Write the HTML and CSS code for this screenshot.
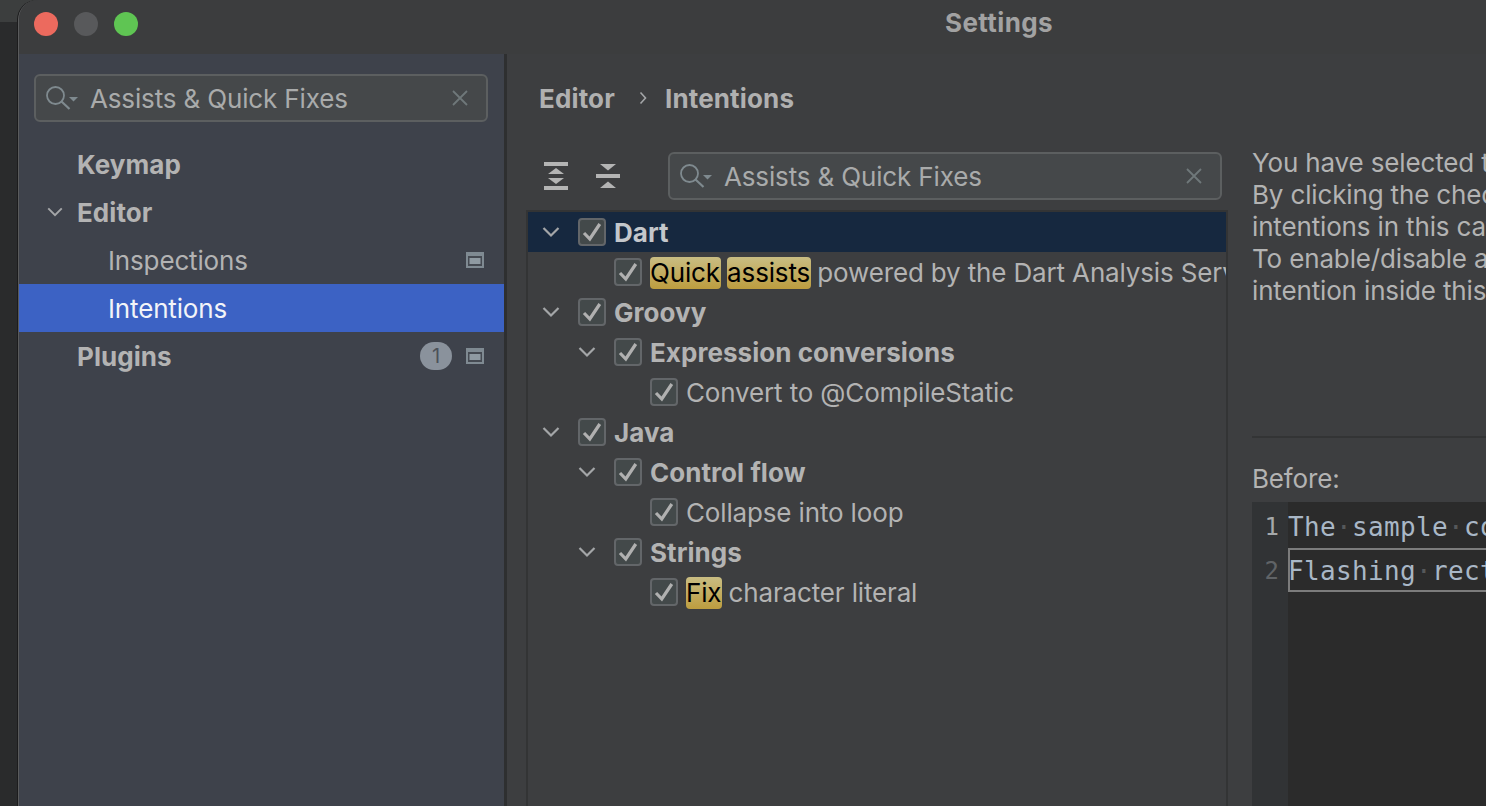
FILE: index.html
```html
<!DOCTYPE html>
<html lang="en">
<head>
  <meta charset="UTF-8">
  <title>Settings</title>
  <link rel="stylesheet" href="styles.css">
</head>
<body>
  <svg class="defs" width="0" height="0">
    <symbol id="check" viewBox="0 0 24 24"><path d="M4 13 L9.800 19 L19.800 4" fill="none" stroke="#b0b0b0" stroke-width="3.200"/></symbol>
    <symbol id="chev" viewBox="0 0 20 20"><path d="M2.500 6 L10 13.500 L17.500 6" fill="none" stroke="#a4a6a8" stroke-width="2.200"/></symbol>
    <symbol id="find" viewBox="0 0 34 30">
      <circle cx="9.500" cy="12.500" r="8.500" fill="none" stroke="#7f8a8f" stroke-width="1.800"/>
      <path d="M15.500 18.500 L23.500 26" stroke="#7f8a8f" stroke-width="2.200"/>
      <path d="M23 14 H32 L27.500 18.500 Z" fill="#7f8a8f"/>
    </symbol>
    <symbol id="close" viewBox="0 0 16 16"><path d="M1 1 L15 15 M15 1 L1 15" stroke="#6f787a" stroke-width="1.800"/></symbol>
    <symbol id="scope" viewBox="0 0 18 16">
      <rect width="18" height="16" fill="#7f8a92"/>
      <rect x="2" y="4" width="14" height="10" fill="#454a52"/>
      <rect x="3.500" y="6" width="11" height="6" fill="#8f9aa2"/>
    </symbol>
  </svg>

  <div class="window">
    <header class="titlebar">
      <div class="lights">
        <span class="light red"></span>
        <span class="light grey"></span>
        <span class="light green"></span>
      </div>
      <div class="title">Settings</div>
    </header>

    <div class="columns">
      <nav class="sidebar">
        <div class="search side-search">
          <svg class="find-icon"><use href="#find"/></svg>
          <span class="search-text">Assists &amp; Quick Fixes</span>
          <svg class="close-icon"><use href="#close"/></svg>
        </div>
        <ul class="side-list">
          <li class="side-row bold"><span class="side-arrow"></span>Keymap</li>
          <li class="side-row bold"><span class="side-arrow"><svg class="side-chev"><use href="#chev"/></svg></span>Editor</li>
          <li class="side-row sub">Inspections<svg class="scope-icon"><use href="#scope"/></svg></li>
          <li class="side-row sub selected">Intentions</li>
          <li class="side-row bold"><span class="side-arrow"></span>Plugins<span class="badge">1</span><svg class="scope-icon after-badge"><use href="#scope"/></svg></li>
        </ul>
      </nav>

      <main class="main">
        <div class="crumbs">
          <span>Editor</span>
          <svg class="crumb-sep" viewBox="0 0 8 14"><path d="M1.500 1.500 L6.500 7 L1.500 12.500" fill="none" stroke="#a4a6a8" stroke-width="1.600"/></svg>
          <span>Intentions</span>
        </div>

        <div class="panes">
          <section class="left-pane">
            <div class="toolbar">
              <svg class="tool" viewBox="0 0 24 28">
                <path d="M0 0 H24 V4 H0 Z M0 24 H24 V28 H0 Z" fill="#b4b4b4"/>
                <path d="M12 6 L20 12 H4 Z M4 16 H20 L12 22 Z" fill="#b4b4b4"/>
              </svg>
              <svg class="tool" viewBox="0 0 24 28">
                <path d="M0 12 H24 V16 H0 Z" fill="#b4b4b4"/>
                <path d="M4 2 H20 L12 8.500 Z M12 19.500 L20 26 H4 Z" fill="#b4b4b4"/>
              </svg>
              <div class="search tree-search">
                <svg class="find-icon"><use href="#find"/></svg>
                <span class="search-text">Assists &amp; Quick Fixes</span>
                <svg class="close-icon"><use href="#close"/></svg>
              </div>
            </div>

            <div class="tree">
              <div class="row lvl0 current bold">
                <span class="arrow"><svg><use href="#chev"/></svg></span>
                <span class="box"><svg><use href="#check"/></svg></span>
                <span>Dart</span>
              </div>
              <div class="row lvl1">
                <span class="arrow"></span>
                <span class="box"><svg><use href="#check"/></svg></span>
                <span class="hits"><mark>Quick</mark> <mark>assists</mark> powered by the Dart Analysis Server</span>
              </div>
              <div class="row lvl0 bold">
                <span class="arrow"><svg><use href="#chev"/></svg></span>
                <span class="box"><svg><use href="#check"/></svg></span>
                <span>Groovy</span>
              </div>
              <div class="row lvl1 bold">
                <span class="arrow"><svg><use href="#chev"/></svg></span>
                <span class="box"><svg><use href="#check"/></svg></span>
                <span>Expression conversions</span>
              </div>
              <div class="row lvl2">
                <span class="arrow"></span>
                <span class="box"><svg><use href="#check"/></svg></span>
                <span>Convert to @CompileStatic</span>
              </div>
              <div class="row lvl0 bold">
                <span class="arrow"><svg><use href="#chev"/></svg></span>
                <span class="box"><svg><use href="#check"/></svg></span>
                <span>Java</span>
              </div>
              <div class="row lvl1 bold">
                <span class="arrow"><svg><use href="#chev"/></svg></span>
                <span class="box"><svg><use href="#check"/></svg></span>
                <span>Control flow</span>
              </div>
              <div class="row lvl2">
                <span class="arrow"></span>
                <span class="box"><svg><use href="#check"/></svg></span>
                <span>Collapse into loop</span>
              </div>
              <div class="row lvl1 bold">
                <span class="arrow"><svg><use href="#chev"/></svg></span>
                <span class="box"><svg><use href="#check"/></svg></span>
                <span>Strings</span>
              </div>
              <div class="row lvl2">
                <span class="arrow"></span>
                <span class="box"><svg><use href="#check"/></svg></span>
                <span class="hits"><mark>Fix</mark> character literal</span>
              </div>
            </div>
          </section>

          <section class="right-pane">
            <div class="desc">
              <div>You have selected the intention category</div>
              <div>By clicking the checkbox you can enable</div>
              <div>intentions in this category.</div>
              <div>To enable/disable a particular intention</div>
              <div>intention inside this category.</div>
            </div>
            <hr class="rule">
            <div class="before">Before:</div>
            <div class="editor">
              <div class="gutter">
                <div class="num">1</div>
                <div class="num dim">2</div>
              </div>
              <div class="code">
                <div class="line first">The<i>·</i>sample<i>·</i>code</div>
                <div class="line caret">Flashing<i>·</i>rectangle</div>
              </div>
            </div>
          </section>
        </div>
      </main>
    </div>
  </div>
</body>
</html>
```

FILE: styles.css
```css
html, body {
  margin: 0;
  height: 806px;
  overflow: hidden;
}
body {
  background: linear-gradient(#3c3e3e 0, #3c3e3e 22px, #2a2b2c 22px);
  font-family: Inter, "Noto Sans", sans-serif;
  font-size: 26px;
  letter-spacing: -0.15px;
  color: #b3b3b3;
}
.defs {
  display: block;
  height: 0;
}
ul {
  list-style: none;
  margin: 0;
  padding: 0;
}
.bold {
  font-weight: 700;
  letter-spacing: 0.05px;
}

.window {
  width: 1960px;
  height: 806px;
  margin-left: 18px;
  border-left: 1px solid #5a5b5c;
  border-top-left-radius: 20px;
  box-shadow: -1px 0 0 #1c1c1d;
  background: #3d3e40;
  display: flex;
  flex-direction: column;
  overflow: hidden;
}

.titlebar {
  height: 54px;
  flex: none;
  background: #3c3d3e;
  display: grid;
  grid-template-columns: 1fr auto 1fr;
  align-items: center;
  padding-bottom: 6px;
  box-sizing: border-box;
}
.lights {
  display: flex;
  gap: 16px;
  padding-left: 15px;
}
.light {
  width: 24px;
  height: 24px;
  border-radius: 50%;
}
.red { background: #ec6a5e; }
.grey { background: #58595b; }
.green { background: #5fc553; }
.title {
  font-weight: 700;
  letter-spacing: 0.4px;
  color: #a2a2a2;
  margin-bottom: 3px;
}

.columns {
  flex: 1;
  display: flex;
  min-height: 0;
}

.sidebar {
  width: 485px;
  flex: none;
  background: #3e424b;
  border-right: 3px solid #2e2f30;
  padding-top: 20px;
}

.search {
  height: 48px;
  box-sizing: border-box;
  border: 2px solid #5c5f60;
  border-radius: 6px;
  background: #45484a;
  display: flex;
  align-items: center;
  color: #a9abab;
}
.side-search {
  margin: 0 16px 18px 15px;
}
.find-icon {
  width: 34px;
  height: 30px;
  margin-left: 10px;
  flex: none;
}
.search-text {
  margin-left: 10px;
  white-space: nowrap;
}
.close-icon {
  width: 16px;
  height: 16px;
  margin-left: auto;
  margin-right: 18px;
  flex: none;
}

.side-row {
  height: 48px;
  display: flex;
  align-items: center;
  padding-left: 27px;
  padding-right: 20px;
}
.side-row.sub {
  padding-left: 89px;
}
.side-row.selected {
  background: #3c62c4;
  color: #f2f4f8;
}
.side-arrow {
  width: 31px;
  flex: none;
  display: flex;
  align-items: center;
}
.side-chev {
  width: 18px;
  height: 18px;
}
.scope-icon {
  width: 18px;
  height: 16px;
  margin-left: auto;
}
.scope-icon.after-badge {
  margin-left: 14px;
}
.badge {
  width: 32px;
  height: 28px;
  margin-left: auto;
  border-radius: 14px;
  background: #8a929c;
  color: #4c5159;
  font-size: 20px;
  font-weight: 400;
  line-height: 28px;
  text-align: center;
}

.main {
  flex: 1;
  min-width: 0;
  display: flex;
  flex-direction: column;
}
.crumbs {
  height: 50px;
  margin: 19px 0 24px 32px;
  display: flex;
  align-items: center;
  font-weight: 700;
  letter-spacing: 0.15px;
  color: #b0b0b0;
}
.crumb-sep {
  width: 8px;
  height: 14px;
  margin: 0 18px 0 24px;
}

.panes {
  flex: 1;
  min-height: 0;
  display: flex;
}
.left-pane {
  width: 702px;
  flex: none;
  margin-left: 19px;
  padding-top: 5px;
  display: flex;
  flex-direction: column;
}
.toolbar {
  height: 48px;
  margin-bottom: 10px;
  display: flex;
  align-items: center;
  padding-left: 18px;
  flex: none;
}
.tool {
  width: 24px;
  height: 28px;
  margin-right: 28px;
  flex: none;
}
.tree-search {
  width: 554px;
  margin-left: 20px;
}

.tree {
  flex: 1;
  border: 2px solid #333435;
  border-bottom: 0;
  overflow: hidden;
}
.row {
  height: 40px;
  display: flex;
  align-items: center;
  white-space: nowrap;
}
.row.current {
  background: #16283f;
  color: #c4c7cb;
}
.lvl0 { padding-left: 13px; }
.lvl1 { padding-left: 49px; }
.lvl2 { padding-left: 85px; }
.arrow {
  width: 20px;
  height: 20px;
  margin-right: 17px;
  flex: none;
}
.arrow svg {
  width: 20px;
  height: 20px;
  display: block;
}
.box {
  width: 28px;
  height: 28px;
  box-sizing: border-box;
  border: 2px solid #636669;
  border-radius: 4px;
  background: #43494a;
  margin-right: 8px;
  flex: none;
}
.box svg {
  width: 24px;
  height: 24px;
  display: block;
}
.hits {
  padding-top: 2px;
}
mark {
  display: inline-block;
  height: 32px;
  line-height: 32px;
  padding-right: 1px;
  margin-right: -1px;
  border-radius: 4px;
  background: linear-gradient(#c9bd83, #bd9d3f);
  color: #000;
}

.right-pane {
  flex: 1;
  min-width: 0;
  margin-left: 24px;
}
.desc {
  height: 289px;
  line-height: 32px;
  white-space: nowrap;
}
.rule {
  height: 2px;
  margin: 0;
  border: 0;
  background: #333435;
}
.before {
  margin-top: 25px;
  line-height: 32px;
}
.editor {
  margin-top: 7px;
  height: 304px;
  background: #2b2b2b;
  display: flex;
}
.gutter {
  width: 36px;
  flex: none;
  background: #313335;
  text-align: right;
  padding-top: 3px;
  font-family: "DejaVu Sans Mono", monospace;
  font-size: 24px;
  letter-spacing: 0;
  color: #a5a8aa;
}
.num {
  height: 44px;
  line-height: 44px;
  padding-right: 9px;
}
.num.dim {
  color: #606366;
}
.code {
  flex: 1;
  padding-top: 3px;
  font-family: "DejaVu Sans Mono", monospace;
  font-size: 26px;
  letter-spacing: 0.35px;
  color: #a9b7c6;
  white-space: nowrap;
}
.line {
  height: 44px;
  line-height: 44px;
  box-sizing: border-box;
}
.line.first {
  height: 43px;
}
.line i {
  font-style: normal;
  color: #55585a;
}
.caret {
  border: 2px solid #7c7c7c;
  border-right: 0;
  line-height: 42px;
  text-indent: -2px;
  background: #2b2b2b;
}
```
